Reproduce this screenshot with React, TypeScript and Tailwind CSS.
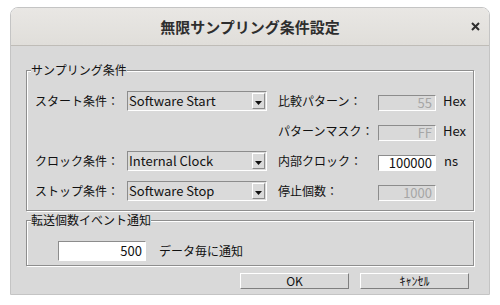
import React from "react";

const F = "font-['Noto_Sans_CJK_JP','Noto_Sans',sans-serif]";

function Combo({ value }: { value: string }) {
  return (
    <div className="w-[140px] h-[20px] flex items-center bg-[#dadada] border border-t-[#8c8c8c] border-l-[#8c8c8c] border-b-white border-r-white">
      <span className="flex-1 pl-[1px] text-[13px] leading-[18px] text-[#111]">{value}</span>
      <div className="w-[13px] h-[16px] mr-[1px] flex items-end justify-center pb-[3px] bg-[#dadada] border border-t-white border-l-white border-b-[#8c8c8c] border-r-[#8c8c8c]">
        <svg width="7" height="4" viewBox="0 0 7 4">
          <path d="M0 0 H7 L3.5 4 Z" fill="#111" />
        </svg>
      </div>
    </div>
  );
}

function Field({ value, disabled, w = "w-[58px]" }: { value: string; disabled?: boolean; w?: string }) {
  return (
    <div
      className={`${w} h-[16px] flex items-center justify-end pr-[3px] border border-t-[#8c8c8c] border-l-[#8c8c8c] border-b-white border-r-white text-[13px] leading-[14px] ${
        disabled ? "bg-[#d9d9d9] text-[#a6a6a6]" : "bg-white text-[#111]"
      }`}
    >
      {value}
    </div>
  );
}

function Group({ title, children, className = "" }: { title: string; children: React.ReactNode; className?: string }) {
  return (
    <fieldset
      className={`w-[448px] border border-[#8e8e8e] shadow-[inset_1px_1px_0_#fff,1px_1px_0_#fff] ${className}`}
    >
      <legend className="ml-[4px] bg-[#d9d9d9] text-[12px] leading-[16px] text-[#111]">{title}</legend>
      {children}
    </fieldset>
  );
}

export default function App() {
  return (
    <div className={`w-[500px] h-[305px] bg-white pt-[7px] pl-[10px] ${F}`}>
      <div className="w-[480px] h-[288px] flex flex-col rounded-t-[8px] border border-[#c4c4c4] overflow-hidden">
        {/* Title bar */}
        <div className="h-[38px] grid grid-cols-[1fr_auto_1fr] items-center bg-gradient-to-b from-[#e9e7e4] to-[#e0deda] border-b border-[#bfbcb7]">
          <div />
          <div className="text-[15px] font-bold text-[#2e2e2e] leading-[20px]">無限サンプリング条件設定</div>
          <div className="flex justify-end pr-[9px]">
            <svg width="9" height="9" viewBox="0 0 9 9">
              <path d="M1 1 L8 8 M8 1 L1 8" stroke="#2e2e2e" strokeWidth="2" />
            </svg>
          </div>
        </div>

        {/* Body */}
        <div className="flex-1 bg-[#d9d9d9] pl-[15px] pt-[16px] flex flex-col">
          <Group title="サンプリング条件" className="pt-[13px] pb-[9px]">
            <div className="pl-[8px] flex flex-col gap-[10px] text-[12px] text-[#111]">
              <div className="h-[20px] flex items-center">
                <span className="w-[92px]">スタート条件：</span>
                <Combo value="Software Start" />
                <span className="w-[111px] pl-[11px]">比較パターン：</span>
                <div className="mt-[3px]"><Field value="55" disabled /></div>
                <span className="ml-[7px] text-[13px]">Hex</span>
              </div>
              <div className="h-[20px] flex items-center">
                <span className="w-[232px]" />
                <span className="w-[111px] pl-[11px]">パターンマスク：</span>
                <div className="mt-[3px]"><Field value="FF" disabled /></div>
                <span className="ml-[7px] text-[13px]">Hex</span>
              </div>
              <div className="h-[20px] flex items-center">
                <span className="w-[92px]">クロック条件：</span>
                <Combo value="Internal Clock" />
                <span className="w-[111px] pl-[11px]">内部クロック：</span>
                <div className="mt-[3px]"><Field value="100000" /></div>
                <span className="ml-[8px] text-[13px]">ns</span>
              </div>
              <div className="h-[20px] flex items-center">
                <span className="w-[92px]">ストップ条件：</span>
                <Combo value="Software Stop" />
                <span className="w-[111px] pl-[11px]">停止個数：</span>
                <div className="mt-[3px]"><Field value="1000" disabled /></div>
              </div>
            </div>
          </Group>

          <Group title="転送個数イベント通知" className="mt-[1px] pt-[13px] pb-[4px]">
            <div className="pl-[31px] h-[20px] flex items-center text-[12px] text-[#111]">
              <div className="w-[88px] h-[20px] flex items-center justify-end pr-[3px] bg-white border border-t-[#8c8c8c] border-l-[#8c8c8c] border-b-white border-r-white text-[13px]">
                500
              </div>
              <span className="ml-[13px]">データ毎に通知</span>
            </div>
          </Group>

          <div className="mt-[7px] pr-[20px] flex justify-end gap-[11px] text-[12px] text-[#111]">
            <div className="w-[109px] h-[16px] flex items-center justify-center bg-[#d9d9d9] border border-t-white border-l-white border-b-[#7f7f7f] border-r-[#7f7f7f] leading-[14px]">
              OK
            </div>
            <div className="w-[109px] h-[16px] flex items-center justify-center bg-[#d9d9d9] border border-t-white border-l-white border-b-[#7f7f7f] border-r-[#7f7f7f] leading-[14px] text-[12px]">
              ｷｬﾝｾﾙ
            </div>
          </div>
        </div>
      </div>
    </div>
  );
}
